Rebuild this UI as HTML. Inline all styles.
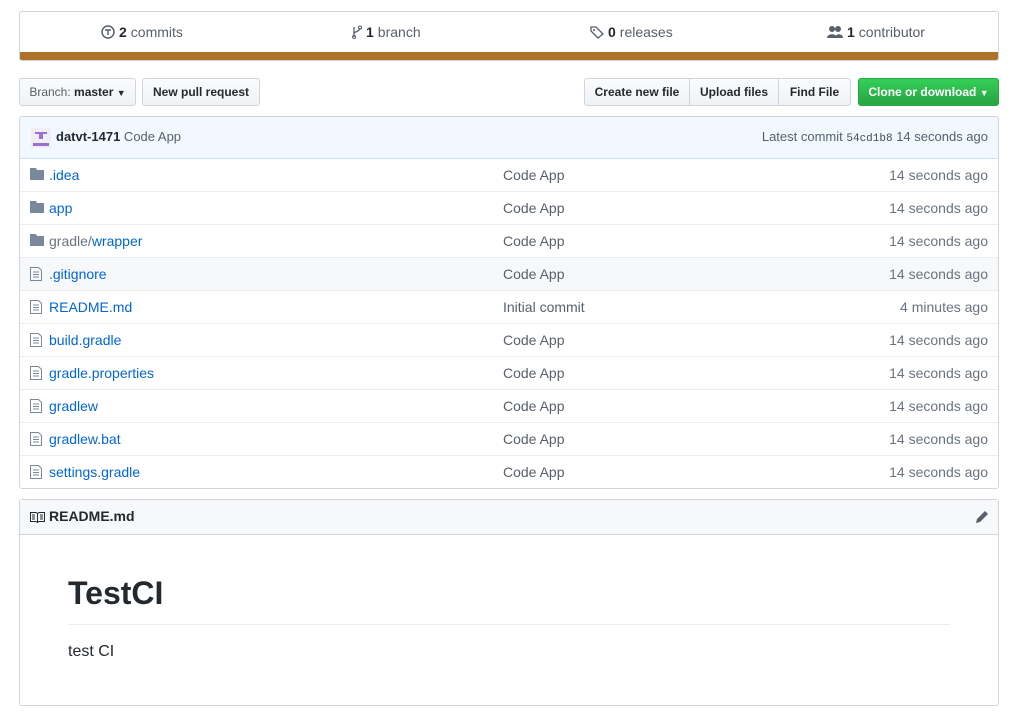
<!DOCTYPE html>
<html><head><meta charset="utf-8"><style>
*{box-sizing:border-box;margin:0;padding:0}
body{width:1014px;height:722px;background:#fff;font-family:"Liberation Sans",sans-serif;font-size:14px;color:#24292e;position:relative;overflow:hidden}
.abs{position:absolute}
.summary{left:19px;top:11px;width:980px;height:50px;border:1px solid #d1d5da;border-radius:3px;overflow:hidden}
.summary .bar{position:absolute;left:0;right:0;bottom:0;height:8px;background:#b07129}
.summary .it{position:absolute;top:12px;font-size:14px;color:#586069;display:flex;align-items:center;gap:4px}
.summary b{color:#24292e}
.btn{position:absolute;top:78px;height:28px;border:1px solid #d1d5da;background:linear-gradient(#fafbfc,#eff3f6);font-size:12px;font-weight:bold;line-height:26px;padding:0;text-align:center;white-space:nowrap;color:#24292e;border-radius:3px}
.green{background:linear-gradient(#34d058,#28a745 90%);border-color:#28a745;color:#fff}
.files{left:19px;top:116px;width:980px;height:373px;border:1px solid #d1d5da;border-radius:3px;overflow:hidden}
.head{height:42px;background:#f1f8ff;border-bottom:1px solid #c8e1ff;position:relative;font-size:13px;color:#586069}
.row{height:33px;border-top:1px solid #eaecef;position:relative;font-size:14px}
.row:nth-child(2){border-top:none;height:32px}
.row .ic{position:absolute;left:10px;top:9px}
.row .n{position:absolute;left:29px;top:8px;color:#0366d6}
.row .m{position:absolute;left:483px;top:8px;color:#586069}
.row .t{position:absolute;right:10px;top:8px;color:#6a737d}
.readme{left:19px;top:499px;width:980px;height:207px;border:1px solid #d1d5da;border-radius:3px}
.rh{height:35px;background:#f6f8fa;border-bottom:1px solid #d1d5da;position:relative}
</style></head><body>
<div class="abs summary">
 <div class="it" style="left:81px"><svg width="14" height="14" viewBox="0 0 14 14"><circle cx="7" cy="7" r="6" fill="none" stroke="#586069" stroke-width="1.5"/><path d="M4 5h6M7 5v5" stroke="#586069" stroke-width="1.5"/></svg><b>2</b> commits</div>
 <div class="it" style="left:332px"><svg width="10" height="14" viewBox="0 0 10 14"><path d="M2 2v10M8 3c0 4-6 3-6 6" fill="none" stroke="#586069" stroke-width="1.3"/><circle cx="2" cy="12" r="1.5" fill="none" stroke="#586069"/><circle cx="8" cy="2.5" r="1.5" fill="none" stroke="#586069"/></svg><b>1</b> branch</div>
 <div class="it" style="left:570px"><svg width="14" height="14" viewBox="0 0 14 14"><path d="M1 2h5l7 7-5 4-7-7z" fill="none" stroke="#586069" stroke-width="1.3"/><circle cx="4" cy="5" r="1" fill="#586069"/></svg><b>0</b> releases</div>
 <div class="it" style="left:807px"><svg width="16" height="14" viewBox="0 0 16 14"><circle cx="5" cy="4" r="3" fill="#586069"/><path d="M0 13c0-5 10-5 10 0z" fill="#586069"/><circle cx="11" cy="4" r="3" fill="#586069"/><path d="M8 13c0-5 8-5 8 0z" fill="#586069"/></svg><b>1</b> contributor</div>
 <div class="bar"></div>
</div>
<div class="btn" style="left:19px;width:117px;font-weight:normal;color:#586069">Branch: <b style="color:#24292e">master</b> <span style="font-size:9px;color:#24292e">▼</span></div>
<div class="btn" style="left:142px;width:118px">New pull request</div>
<div class="btn" style="left:584px;width:106px;border-radius:3px 0 0 3px">Create new file</div>
<div class="btn" style="left:689px;width:90px;border-radius:0">Upload files</div>
<div class="btn" style="left:778px;width:73px;border-radius:0 3px 3px 0">Find File</div>
<div class="btn green" style="left:858px;width:141px">Clone or download <span style="font-size:9px">▼</span></div>
<div class="abs files">
 <div class="head">
  <svg class="abs" style="left:11px;top:11px" width="20" height="20" viewBox="0 0 20 20"><rect width="20" height="20" fill="#f0eef5"/><rect x="4" y="4" width="12" height="2" fill="#9a6fd6"/><rect x="8" y="6" width="4" height="5" fill="#9a6fd6"/><rect x="2" y="15" width="16" height="3" fill="#9a6fd6"/></svg>
  <span class="abs" style="left:36px;top:12px"><b style="color:#24292e">datvt-1471</b> Code App</span>
  <span class="abs" style="right:10px;top:12px">Latest commit <span style="font-family:'Liberation Mono',monospace;font-size:11px;color:#444d56">54cd1b8</span> 14 seconds ago</span>
 </div>
 <div class="row"><svg class="ic" width="14" height="12" viewBox="0 0 14 12"><path d="M0 0h6l1 2h7v10H0z" fill="#79889b"/></svg><span class="n">.idea</span><span class="m">Code App</span><span class="t">14 seconds ago</span></div>
 <div class="row"><svg class="ic" width="14" height="12" viewBox="0 0 14 12"><path d="M0 0h6l1 2h7v10H0z" fill="#79889b"/></svg><span class="n">app</span><span class="m">Code App</span><span class="t">14 seconds ago</span></div>
 <div class="row"><svg class="ic" width="14" height="12" viewBox="0 0 14 12"><path d="M0 0h6l1 2h7v10H0z" fill="#79889b"/></svg><span class="n"><span style="color:#6a737d">gradle/</span>wrapper</span><span class="m">Code App</span><span class="t">14 seconds ago</span></div>
 <div class="row" style="background:#f6f8fa"><svg class="ic" width="12" height="14" viewBox="0 0 12 14"><path d="M.5.5h8l3 3v10H.5z M3 5h6M3 7.5h6M3 10h6" fill="none" stroke="#79889b"/></svg><span class="n">.gitignore</span><span class="m">Code App</span><span class="t">14 seconds ago</span></div>
 <div class="row"><svg class="ic" width="12" height="14" viewBox="0 0 12 14"><path d="M.5.5h8l3 3v10H.5z M3 5h6M3 7.5h6M3 10h6" fill="none" stroke="#79889b"/></svg><span class="n">README.md</span><span class="m">Initial commit</span><span class="t">4 minutes ago</span></div>
 <div class="row"><svg class="ic" width="12" height="14" viewBox="0 0 12 14"><path d="M.5.5h8l3 3v10H.5z M3 5h6M3 7.5h6M3 10h6" fill="none" stroke="#79889b"/></svg><span class="n">build.gradle</span><span class="m">Code App</span><span class="t">14 seconds ago</span></div>
 <div class="row"><svg class="ic" width="12" height="14" viewBox="0 0 12 14"><path d="M.5.5h8l3 3v10H.5z M3 5h6M3 7.5h6M3 10h6" fill="none" stroke="#79889b"/></svg><span class="n">gradle.properties</span><span class="m">Code App</span><span class="t">14 seconds ago</span></div>
 <div class="row"><svg class="ic" width="12" height="14" viewBox="0 0 12 14"><path d="M.5.5h8l3 3v10H.5z M3 5h6M3 7.5h6M3 10h6" fill="none" stroke="#79889b"/></svg><span class="n">gradlew</span><span class="m">Code App</span><span class="t">14 seconds ago</span></div>
 <div class="row"><svg class="ic" width="12" height="14" viewBox="0 0 12 14"><path d="M.5.5h8l3 3v10H.5z M3 5h6M3 7.5h6M3 10h6" fill="none" stroke="#79889b"/></svg><span class="n">gradlew.bat</span><span class="m">Code App</span><span class="t">14 seconds ago</span></div>
 <div class="row"><svg class="ic" width="12" height="14" viewBox="0 0 12 14"><path d="M.5.5h8l3 3v10H.5z M3 5h6M3 7.5h6M3 10h6" fill="none" stroke="#79889b"/></svg><span class="n">settings.gradle</span><span class="m">Code App</span><span class="t">14 seconds ago</span></div>
</div>
<div class="abs readme">
 <div class="rh">
  <svg class="abs" style="left:10px;top:11px" width="15" height="12" viewBox="0 0 15 12"><path d="M.5 1.5h5.5l1.5 1v9l-1.5-1H.5zM14.5 1.5H9l-1.5 1v9l1.5-1h5.5z M2 4h3M2 6h3M2 8h3M10 4h3M10 6h3M10 8h3" fill="none" stroke="#24292e"/></svg>
  <b class="abs" style="left:29px;top:8px;font-size:14px">README.md</b>
  <svg class="abs" style="right:9px;top:10px" width="14" height="14" viewBox="0 0 14 14"><path d="M1 13l1-4 8-8 3 3-8 8z" fill="#586069"/></svg>
 </div>
 <div class="abs" style="left:48px;top:75px;font-size:32px;font-weight:bold">TestCI</div>
 <div class="abs" style="left:48px;top:124px;width:882px;border-top:1px solid #eaecef"></div>
 <div class="abs" style="left:48px;top:143px;font-size:16px">test CI</div>
</div>
</body></html>
